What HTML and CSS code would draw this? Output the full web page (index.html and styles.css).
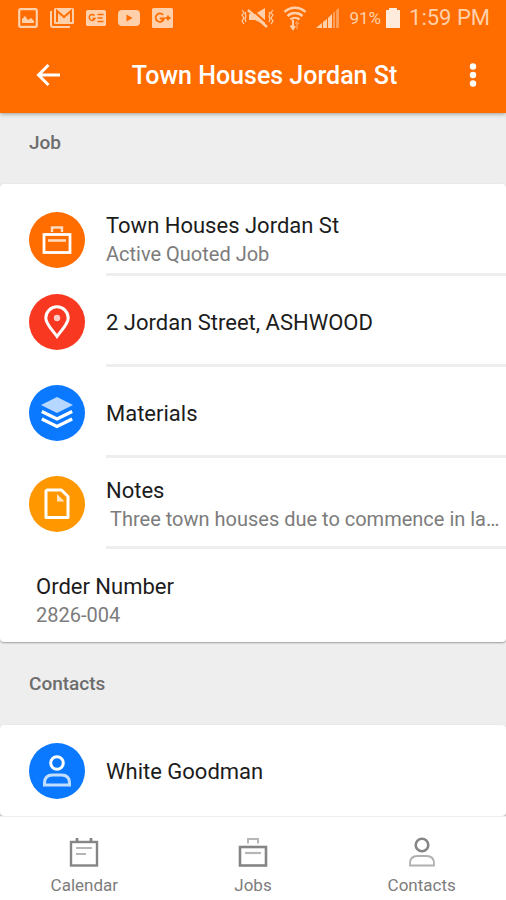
FILE: index.html
```html
<!DOCTYPE html>
<html lang="en">
<head>
<meta charset="utf-8">
<meta name="viewport" content="width=device-width, initial-scale=1">
<title>Town Houses Jordan St</title>
<link rel="stylesheet" href="styles.css">
</head>
<body>
<header class="top">
  <div class="status">
    <div class="status-group notifications">
      <svg width="20" height="20" viewBox="0 0 20 20" aria-hidden="true"><rect x="1.2" y="1.2" width="17.6" height="17.6" rx="1.5" fill="none" stroke="currentColor" stroke-width="2.2"/><path d="M4 15v-4l3-3 3 4 3-2 3 3v2z" fill="currentColor"/></svg>
      <svg width="24" height="20" viewBox="0 0 24 20" aria-hidden="true"><path d="M1 3v14q0 2 2 2h17" fill="none" stroke="currentColor" stroke-width="2"/><rect x="4" y="0" width="20" height="16" rx="1.5" fill="currentColor"/><path d="M7 14V3l7 6 7-6v11" fill="none" stroke="#ff6c00" stroke-width="2"/></svg>
      <svg width="20" height="16" viewBox="0 0 20 16" aria-hidden="true"><rect width="20" height="16" rx="1.5" fill="currentColor"/><path d="M8.500 5.500A3 3 0 1 0 9 8.500H6.500M11.500 4.500h6M11.500 8h5M11.500 11.500h6" fill="none" stroke="#ff6c00" stroke-width="1.400"/></svg>
      <svg width="22" height="16" viewBox="0 0 22 16" aria-hidden="true"><rect width="22" height="16" rx="4" fill="currentColor"/><path d="M8.500 4.500v7l6-3.500z" fill="#ff6c00"/></svg>
      <svg width="21" height="20" viewBox="0 0 21 20" aria-hidden="true"><rect width="21" height="20" rx="1.500" fill="currentColor"/><path d="M11 6.800A4.200 4.200 0 1 0 12 10.500H7.800M13.500 10h5M16 7.500v5" fill="none" stroke="#ff6c00" stroke-width="1.800"/></svg>
    </div>
    <div class="status-group system">
      <svg width="33" height="20" viewBox="0 0 33 20" aria-hidden="true"><path d="M8 6h6l10-6v17l-10-5H8z" fill="currentColor"/><path d="M9 0l19 17" stroke="#ff6c00" stroke-width="2"/><path d="M7 2l19 17" stroke="currentColor" stroke-width="2.400"/><path d="M1 2l2 2.500-2 2.500 2 3-2 3 2 3M5 4l-1 2 1 2-1 3 1 3M32 2l-2 2.500 2 2.500-2 3 2 3-2 3M28 4l1 2-1 2 1 3-1 3" fill="none" stroke="currentColor" stroke-width="1.200"/></svg>
      <svg width="24" height="26" viewBox="0 0 24 26" aria-hidden="true"><path d="M1.500 7a15 15 0 0 1 21 0M4.500 11a11 11 0 0 1 15 0M7.500 14.500a7 7 0 0 1 9 0" fill="none" stroke="currentColor" stroke-width="2.400"/><path d="M10 15v8M7.500 20.500L10 24l2-3" fill="none" stroke="currentColor" stroke-width="2"/><path d="M14 24v-7M12.500 19l1.500-2 2 2" fill="none" stroke="currentColor" stroke-width="1.500" opacity=".5"/></svg>
      <svg width="24" height="20" viewBox="0 0 24 20" aria-hidden="true"><path d="M0 20l6-5v5zM7 14l4-3v9H7zM12 10l4-4v14h-4z" fill="currentColor"/><path d="M17 5l2-2v17h-2zM20 2l3-2v20h-3z" fill="currentColor" opacity=".5"/></svg>
      <span class="battery">91%<svg width="14" height="20" viewBox="0 0 14 20" aria-hidden="true"><path d="M0 2h3V0h8v2h3v18H0z" fill="#ffebdc"/></svg></span>
      <span class="clock">1:59 PM</span>
    </div>
  </div>
  <div class="appbar">
    <button class="icon-button" aria-label="Back"><svg width="24" height="24" viewBox="0 0 24 24" aria-hidden="true"><path d="M12.500 2L2.500 12l10 10M2.500 12H24" fill="none" stroke="currentColor" stroke-width="3"/></svg></button>
    <h1>Town Houses Jordan St</h1>
    <button class="icon-button" aria-label="More options"><svg width="8" height="24" viewBox="0 0 8 24" fill="currentColor" aria-hidden="true"><circle cx="4" cy="3.500" r="3.200"/><circle cx="4" cy="12" r="3.200"/><circle cx="4" cy="20.500" r="3.200"/></svg></button>
  </div>
</header>

<main>
  <section>
    <h2 class="job-heading">Job</h2>
    <div class="card job-card">
      <div class="row first">
        <span class="badge orange"><svg width="30" height="30" viewBox="0 0 30 30" fill="none" stroke="#fff" aria-hidden="true"><rect x="2" y="9.500" width="26" height="18" stroke-width="2.800"/><path d="M10 7V2.500h10V7" stroke-width="2.400" opacity=".75"/><path d="M6 15.500h18" stroke-width="2.600" opacity=".75"/></svg></span>
        <div class="text"><span class="title">Town Houses Jordan St</span><span class="sub">Active Quoted Job</span></div>
      </div>
      <div class="row">
        <span class="badge red"><svg width="26" height="34" viewBox="0 0 26 34" aria-hidden="true"><path d="M13 31.500C8 24.500 1.800 19 1.800 13a11.200 11.200 0 0 1 22.400 0c0 6-6.200 11.500-11.200 18.500z" fill="none" stroke="#fff" stroke-width="3"/><circle cx="13" cy="13" r="3.200" fill="#fff" opacity=".75"/></svg></span>
        <div class="text"><span class="title">2 Jordan Street, ASHWOOD</span></div>
      </div>
      <div class="row">
        <span class="badge blue"><svg width="32" height="32" viewBox="0 0 32 32" aria-hidden="true"><path d="M16 0l16 8-16 8L0 8z" fill="#fff" opacity=".7"/><path d="M.8 14.500L16 22l15.200-7.500M.8 22L16 29.500 31.200 22" fill="none" stroke="#fff" stroke-width="3.200"/></svg></span>
        <div class="text"><span class="title">Materials</span></div>
      </div>
      <div class="row">
        <span class="badge amber"><svg width="26" height="32" viewBox="0 0 26 32" aria-hidden="true"><path d="M3 2h14.500L24 8.500V29.500H2V3z" fill="none" stroke="#fff" stroke-width="3" stroke-linejoin="round"/><path d="M13 6l7.500 7.500H13z" fill="#fff" opacity=".75"/></svg></span>
        <div class="text"><span class="title">Notes</span><span class="sub note">Three town houses due to commence in la…</span></div>
      </div>
      <div class="order"><span class="title">Order Number</span><span class="sub">2826-004</span></div>
    </div>
  </section>
  <section>
    <h2>Contacts</h2>
    <div class="card">
      <div class="row last">
        <span class="badge blue"><svg width="28" height="32" viewBox="0 0 28 32" fill="none" stroke="#fff" stroke-width="3" aria-hidden="true"><circle cx="14" cy="8" r="6.300"/><path d="M1.500 30v-2q0-8 8-8h9q8 0 8 8v2z" opacity=".75"/></svg></span>
        <div class="text"><span class="title">White Goodman</span></div>
      </div>
    </div>
  </section>
</main>

<nav>
  <a href="#calendar"><svg width="30" height="30" viewBox="0 0 30 30" fill="none" stroke="#858585" aria-hidden="true"><rect x="2" y="5" width="26" height="23.500" stroke-width="2.400"/><path d="M8 1v4M22 1v4" stroke-width="2.800"/><path d="M7 11h16M7 17h10" stroke-width="2" opacity=".6"/></svg>Calendar</a>
  <a href="#jobs"><svg width="30" height="30" viewBox="0 0 30 30" fill="none" stroke="#858585" aria-hidden="true"><rect x="2" y="10" width="26" height="18.500" stroke-width="2.600"/><path d="M10 6.500V2h10v4.500" stroke-width="2" opacity=".6"/><path d="M7 16h16" stroke-width="2.200" opacity=".6"/></svg>Jobs</a>
  <a href="#contacts"><svg width="30" height="30" viewBox="0 0 30 30" fill="none" stroke="#858585" aria-hidden="true"><circle cx="15" cy="8" r="6.300" stroke-width="2.600"/><path d="M3 28.500v-2q0-7.500 7.500-7.500h9q7.500 0 7.500 7.500v2z" stroke-width="1.800" opacity=".65"/></svg>Contacts</a>
</nav>
</body>
</html>
```
FILE: styles.css
```css
* {
  box-sizing: border-box;
}

body {
  margin: 0;
  min-height: 100vh;
  display: flex;
  flex-direction: column;
  background: #eeeeee;
  color: #1c1c1c;
  font-family: Roboto, "Liberation Sans", sans-serif;
}

.top {
  background: #ff6c00;
  color: #fff;
  box-shadow: 0 1px 4px rgba(0, 0, 0, 0.35);
}

.status {
  display: flex;
  justify-content: space-between;
  align-items: center;
  height: 36px;
  padding: 0 16px 0 18px;
  color: #ffd0aa;
}

.status-group {
  display: flex;
  align-items: center;
}

.notifications {
  gap: 12px;
}

.system {
  gap: 9px;
}

.battery {
  display: flex;
  align-items: center;
  gap: 5px;
  font-size: 17px;
}

.clock {
  font-size: 22px;
  line-height: 28px;
}

.appbar {
  display: flex;
  align-items: center;
  height: 77px;
  padding: 0 9px 0 24px;
}

.icon-button {
  flex: none;
  display: grid;
  place-items: center;
  width: 48px;
  height: 48px;
  border: 0;
  padding: 0;
  background: none;
  color: #fff;
}

h1 {
  flex: 1;
  margin: 0;
  padding: 2px 0 0 8px;
  text-align: center;
  font-size: 25px;
  line-height: 32px;
  font-weight: 500;
}

main {
  flex: 1;
}

h2 {
  margin: 0;
  padding: 30px 29px 29px;
  font-size: 19px;
  line-height: 24px;
  font-weight: 500;
  color: #6c6c6c;
}

.job-heading {
  padding-top: 18px;
}

.card {
  background: #fff;
  border-radius: 4px;
  box-shadow: 0 1px 2px rgba(0, 0, 0, 0.35);
}

.job-card {
  padding-top: 20px;
}

.row {
  display: flex;
  align-items: center;
  gap: 21px;
  height: 91px;
  padding-left: 29px;
}

.badge {
  flex: none;
  display: grid;
  place-items: center;
  width: 56px;
  height: 56px;
  border-radius: 50%;
}

.orange {
  background: #ff6c00;
}

.red {
  background: #f93822;
}

.blue {
  background: #0a78ff;
}

.amber {
  background: #ff9800;
}

.text {
  flex: 1;
  min-width: 0;
  align-self: stretch;
  display: flex;
  flex-direction: column;
  justify-content: center;
  padding-top: 6px;
  border-bottom: 3px solid #eeeeee;
}

.first {
  height: 72px;
}

.first .text {
  padding-top: 2px;
}

.last .text {
  padding-top: 2px;
  border-bottom: 0;
}

.title {
  font-size: 22px;
  line-height: 28px;
}

.sub {
  font-size: 20px;
  line-height: 28px;
  color: #7c7c7c;
}

.note {
  padding-left: 4px;
  white-space: nowrap;
}

.order {
  display: flex;
  flex-direction: column;
  padding: 24px 36px 13px;
}

nav {
  display: grid;
  grid-template-columns: repeat(3, 1fr);
  padding: 20px 0 3px;
  background: #fff;
  border-top: 1px solid #eeeeee;
}

nav a {
  display: flex;
  flex-direction: column;
  align-items: center;
  gap: 6px;
  font-size: 17px;
  line-height: 24px;
  color: #7c7c7c;
  text-decoration: none;
}
```
